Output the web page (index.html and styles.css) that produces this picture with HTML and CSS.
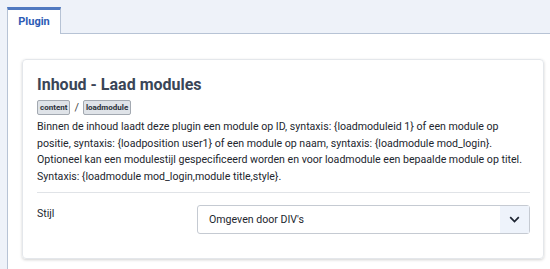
FILE: index.html
```html
<!DOCTYPE html>
<html lang="nl">
<head>
    <meta charset="UTF-8">
    <meta name="viewport" content="width=device-width, initial-scale=1.0">
    <title>Plugin</title>
    <link rel="stylesheet" href="styles.css">
</head>
<body>
    <div class="tabs">
        <div class="tab">Plugin</div>
    </div>
    <div class="panel">
        <div class="card">
            <h2 class="title">Inhoud - Laad modules</h2>
            <div class="tags">
                <span class="badge">content</span>
                <span class="sep">/</span>
                <span class="badge">loadmodule</span>
            </div>
            <p class="desc">Binnen de inhoud laadt deze plugin een module op ID, syntaxis: {loadmoduleid 1} of een module op positie, syntaxis: {loadposition user1} of een module op naam, syntaxis: {loadmodule mod_login}. Optioneel kan een modulestijl gespecificeerd worden en voor loadmodule een bepaalde module op titel. Syntaxis: {loadmodule mod_login,module title,style}.</p>
            <hr class="divider">
            <div class="field">
                <label class="field-label" for="style">Stijl</label>
                <div class="select">
                    <span class="select-value">Omgeven door DIV's</span>
                    <span class="select-caret">
                        <svg width="11" height="7" viewBox="0 0 11 7"><path d="M1.2 1.2 L5.5 5.5 L9.8 1.2" fill="none" stroke="#1c2330" stroke-width="1.7"/></svg>
                    </span>
                </div>
            </div>
        </div>
    </div>
</body>
</html>
```

FILE: styles.css
```css
body {
    margin: 0;
    background: #eef2f9;
    font-family: Roboto, "Liberation Sans", sans-serif;
    color: #22262e;
    height: 269px;
    overflow: hidden;
}

.tabs {
    display: flex;
    padding: 7px 0 0 7px;
}
.tab {
    width: 52px;
    height: 24px;
    line-height: 24px;
    text-align: center;
    background: #fff;
    border-top: 3px solid #4f78c0;
    border-left: 1px solid #b7c3d5;
    border-right: 1px solid #b7c3d5;
    color: #2d5bb5;
    font-size: 11px;
    font-weight: bold;
    margin-bottom: -1px;
    position: relative;
}

.panel {
    margin-left: 7px;
    background: #fff;
    border-top: 1px solid #b7c3d5;
    border-left: 1px solid #b7c3d5;
    padding: 25px 6px 20px 14px;
    height: 300px;
}

.card {
    border: 1px solid #e4e7eb;
    border-radius: 4px;
    box-shadow: 0 1px 3px rgba(0, 0, 0, 0.18);
    padding: 13px 13px 24px 14px;
}

.title {
    margin: 0;
    font-size: 16px;
    font-weight: bold;
    color: #3a4557;
    line-height: 24px;
}

.tags {
    display: flex;
    align-items: center;
    margin-top: 3px;
    font-size: 8px;
}
.badge {
    background: #dfe3e8;
    border: 1px solid #a3a9b1;
    border-radius: 2px;
    padding: 2px 2px;
    font-weight: bold;
    color: #2b313a;
    line-height: 9px;
}
.sep {
    margin: 0 4px;
    font-size: 11px;
    color: #444;
}

.desc {
    margin: 4px 0 0;
    font-size: 10.6px;
    line-height: 16.5px;
    color: #22262e;
}

.divider {
    border: 0;
    border-top: 1px solid #e0e3e7;
    margin: 7px 0 12px;
}

.field {
    display: flex;
    align-items: flex-start;
}
.field-label {
    width: 160px;
    font-size: 10.6px;
    padding-top: 2px;
}
.select {
    flex: 1;
    display: flex;
    height: 27px;
    border: 1px solid #c5cad2;
    border-radius: 3px;
    font-size: 10.6px;
}
.select-value {
    flex: 1;
    padding-left: 11px;
    line-height: 27px;
}
.select-caret {
    width: 29px;
    background: #eef3fb;
    display: flex;
    align-items: center;
    justify-content: center;
}
```
